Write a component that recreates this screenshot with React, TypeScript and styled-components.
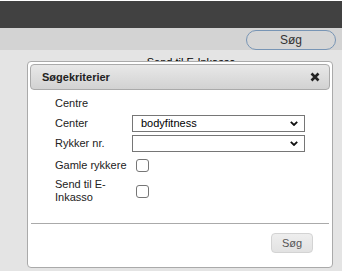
import React from "react";
import styled, { createGlobalStyle } from "styled-components";

const Global = createGlobalStyle`
  html, body { margin: 0; padding: 0; }
  body {
    background: #e4e4e4;
    font-family: "Liberation Sans", Arial, sans-serif;
    width: 342px;
    height: 271px;
    overflow: hidden;
  }
`;

const Page = styled.div`
  position: relative;
  width: 342px;
  height: 271px;
  border-top: 1px solid #ffffff;
  box-sizing: border-box;
`;

const DarkBar = styled.div`
  height: 27px;
  background: #414141;
`;

const Toolbar = styled.div`
  height: 22px;
  background: #d3d3d3;
  display: flex;
  justify-content: flex-end;
  align-items: flex-start;
  padding: 2px 6px 0 0;
  box-sizing: border-box;
`;

const PillButton = styled.button`
  width: 90px;
  height: 20px;
  border-radius: 10px;
  border: 1px solid #7895b5;
  background: #d6d6d6;
  color: #333;
  font-family: "Liberation Sans", Arial, sans-serif;
  font-size: 12px;
  padding: 0;
  line-height: 18px;
`;

const Behind = styled.div`
  display: flex;
  justify-content: center;
  padding: 6px 0 0 40px;
  font-size: 11px;
  color: #000;
`;

const Dialog = styled.div`
  position: absolute;
  left: 27px;
  top: 60px;
  width: 306px;
  height: 207px;
  box-sizing: border-box;
  background: #fff;
  border: 1px solid #aaaaaa;
  border-radius: 4px;
  padding: 2px;
  display: flex;
  flex-direction: column;
`;

const Header = styled.div`
  height: 26px;
  box-sizing: border-box;
  border: 1px solid #aaaaaa;
  border-radius: 4px;
  background: linear-gradient(#e8e8e8, #d2d2d2);
  display: flex;
  align-items: center;
  justify-content: space-between;
  padding: 0 9px 0 11px;
`;

const Title = styled.span`
  font-weight: bold;
  font-size: 11px;
  color: #222;
`;

const Close = styled.svg`
  width: 10px;
  height: 10px;
`;

const Body = styled.div`
  flex: 1;
  padding: 6px 0 0 25px;
  display: grid;
  grid-template-columns: 77px 173px;
  grid-auto-rows: auto;
  align-content: start;
  font-size: 11px;
  color: #222;
`;

const Group = styled.div`
  grid-column: 1 / span 2;
  height: 16px;
  line-height: 14px;
  margin-bottom: 1px;
`;

const Label = styled.div<{ $h: number }>`
  height: ${(p) => p.$h}px;
  display: flex;
  align-items: center;
  line-height: 13px;
`;

const Cell = styled.div<{ $h: number }>`
  height: ${(p) => p.$h}px;
  display: flex;
  align-items: center;
`;

const SelectBox = styled.div`
  position: relative;
  width: 173px;
  height: 17px;
  box-sizing: border-box;
  border: 1px solid #767676;
  background: #fff;
  font-size: 11px;
  color: #000;
  padding-left: 8px;
  line-height: 15px;
`;

const Chevron = styled.svg`
  position: absolute;
  right: 6px;
  top: 5px;
  width: 8px;
  height: 5px;
`;

const Check = styled.span`
  margin-left: 4px;
  width: 13px;
  height: 13px;
  box-sizing: border-box;
  border: 1px solid #767676;
  border-radius: 3px;
  background: #fff;
`;

const ButtonPane = styled.div`
  border-top: 1px solid #aaaaaa;
  margin: 0 1px;
  height: 42px;
  display: flex;
  justify-content: flex-end;
  align-items: flex-start;
  padding: 9px 16px 0 0;
  box-sizing: border-box;
`;

const SearchButton = styled.button`
  width: 42px;
  height: 20px;
  border: 1px solid #d3d3d3;
  border-radius: 4px;
  background: linear-gradient(#eeeeee, #e2e2e2);
  color: #555;
  font-family: "Liberation Sans", Arial, sans-serif;
  font-size: 11px;
  padding: 0;
`;

const Select = ({ value }: { value: string }) => (
  <SelectBox>
    {value}
    <Chevron viewBox="0 0 8 5">
      <path d="M0.8 0.8 L4 4 L7.2 0.8" fill="none" stroke="#111" strokeWidth="1.8" />
    </Chevron>
  </SelectBox>
);

export default function App() {
  return (
    <>
      <Global />
      <Page>
        <DarkBar />
        <Toolbar>
          <PillButton>Søg</PillButton>
        </Toolbar>
        <Behind>Send til E-Inkasso</Behind>
        <Dialog>
          <Header>
            <Title>Søgekriterier</Title>
            <Close viewBox="0 0 10 10">
              <path d="M1.5 1.5 L8.5 8.5 M8.5 1.5 L1.5 8.5" stroke="#222" strokeWidth="2.6" />
            </Close>
          </Header>
          <Body>
            <Group>Centre</Group>
            <Label $h={20}>Center</Label>
            <Cell $h={20}>
              <Select value="bodyfitness" />
            </Cell>
            <Label $h={20}>Rykker nr.</Label>
            <Cell $h={20}>
              <Select value="" />
            </Cell>
            <Label $h={24}>Gamle rykkere</Label>
            <Cell $h={24}>
              <Check />
            </Cell>
            <Label $h={28}>
              Send til E-
              <br />
              Inkasso
            </Label>
            <Cell $h={28}>
              <Check />
            </Cell>
          </Body>
          <ButtonPane>
            <SearchButton>Søg</SearchButton>
          </ButtonPane>
        </Dialog>
      </Page>
    </>
  );
}
